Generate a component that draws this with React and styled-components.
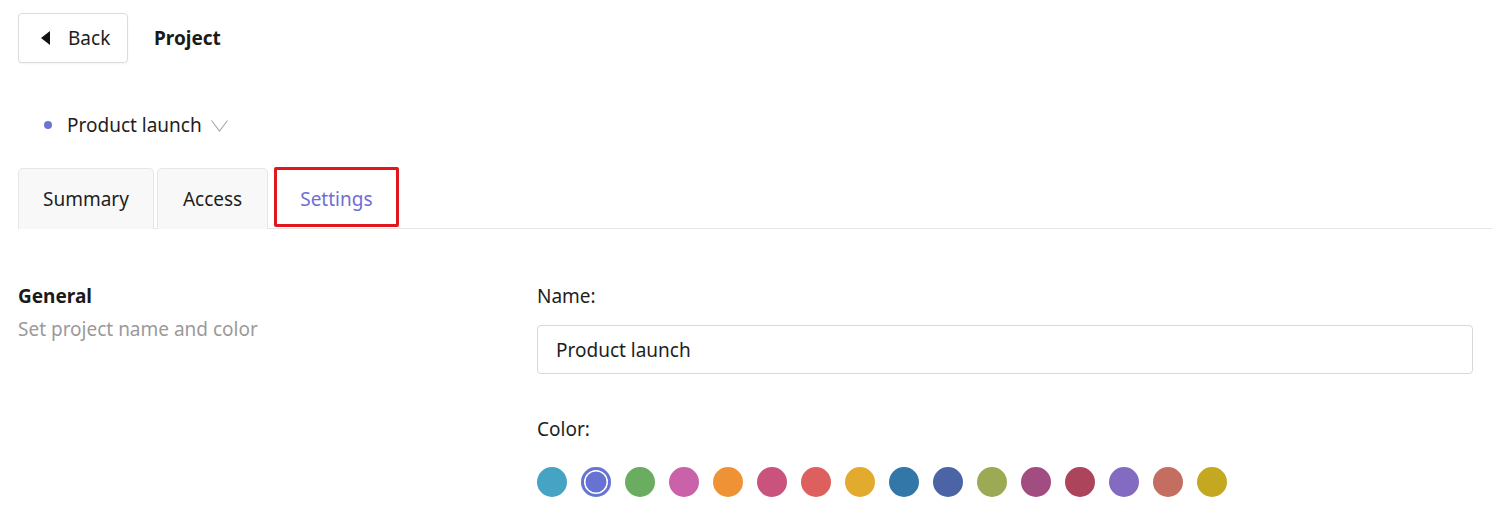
import React from "react";
import styled, { createGlobalStyle } from "styled-components";

const Global = createGlobalStyle`
  html, body { margin: 0; padding: 0; background: #fff; }
  body { font-family: "Noto Sans", "Open Sans", sans-serif; color: #1e1e1e; }
  * { box-sizing: border-box; }
`;

const Page = styled.div`
  width: 1492px;
  padding-top: 13px;
`;

const Header = styled.div`
  display: flex;
  align-items: center;
  gap: 26px;
  padding-left: 18px;
  height: 50px;
`;

const BackButton = styled.button`
  display: flex;
  align-items: center;
  gap: 18px;
  height: 50px;
  width: 110px;
  padding: 0 0 0 22px;
  background: #fff;
  border: 1px solid #dcdcdc;
  border-radius: 4px;
  box-shadow: 0 1px 2px rgba(0, 0, 0, 0.05);
  font: inherit;
  font-size: 19px;
  color: #1e1e1e;
`;

const Title = styled.div`
  font-size: 19px;
  font-weight: 700;
  color: #1a1a1a;
`;

const ProjectRow = styled.div`
  display: flex;
  align-items: center;
  height: 40px;
  margin-top: 42px;
  padding-left: 44px;
  font-size: 19px;
  color: #1e1e1e;
`;

const Dot = styled.span`
  width: 8px;
  height: 8px;
  border-radius: 50%;
  background: ${(p) => p.$color};
  margin-right: 15px;
`;

const Chevron = styled.svg`
  margin-left: 9px;
  margin-top: 1px;
`;

const TabBar = styled.div`
  display: flex;
  gap: 3px;
  margin-top: 23px;
  margin-left: 18px;
  border-bottom: 1px solid #e6e6e6;
  height: 61px;
`;

const Tab = styled.div`
  display: flex;
  align-items: center;
  justify-content: center;
  padding: ${(p) => (p.$active ? "4px" : "0")} ${(p) => p.$pad}px 0;
  font-size: 19px;
  border: 1px solid ${(p) => (p.$active ? "#e0181e" : "#e6e6e6")};
  border-width: ${(p) => (p.$active ? "3px" : "1px 1px 0 1px")};
  border-radius: ${(p) => (p.$active ? "2px" : "5px 5px 0 0")};
  background: ${(p) => (p.$active ? "#fff" : "#f8f8f8")};
  color: ${(p) => (p.$active ? "#6d6dd6" : "#1e1e1e")};
  margin-left: ${(p) => (p.$active ? "3px" : "0")};
  height: ${(p) => (p.$active ? "60px" : "61px")};
  margin-top: ${(p) => (p.$active ? "-1px" : "0")};
`;

const Section = styled.div`
  display: grid;
  grid-template-columns: 519px 1fr;
  padding: 55px 19px 0 18px;
`;

const SideInfo = styled.div`
  display: flex;
  flex-direction: column;
  gap: 8px;
`;

const SideTitle = styled.div`
  font-size: 19px;
  font-weight: 700;
  color: #1a1a1a;
  line-height: 25px;
`;

const SideText = styled.div`
  font-size: 19px;
  color: #9a9a9a;
  line-height: 25px;
`;

const Fields = styled.div`
  display: flex;
  flex-direction: column;
`;

const Label = styled.div`
  font-size: 19px;
  line-height: 25px;
  color: #1e1e1e;
  margin-top: ${(p) => p.$top || 0}px;
`;

const Input = styled.div`
  margin-top: 16px;
  height: 49px;
  border: 1px solid #d8d8d8;
  border-radius: 4px;
  display: flex;
  align-items: center;
  padding-left: 18px;
  font-size: 19px;
  color: #1e1e1e;
`;

const Swatches = styled.div`
  display: flex;
  align-items: center;
  gap: 14px;
  margin-top: 25px;
`;

const Swatch = styled.div`
  width: 30px;
  height: 30px;
  border-radius: 50%;
  background: ${(p) => p.$color};
  box-shadow: ${(p) =>
    p.$selected ? `inset 0 0 0 3px ${p.$color}, inset 0 0 0 4.5px #fff` : "none"};
`;

const colors = [
  "#46a3c4",
  "#6673d3",
  "#6aad60",
  "#c962a8",
  "#ef9235",
  "#c9537c",
  "#dd5f5e",
  "#e3ab2e",
  "#3377a8",
  "#4a64a5",
  "#9daa55",
  "#a14d82",
  "#ac445c",
  "#836bc1",
  "#c46e61",
  "#c4a820",
];

export default function App() {
  return (
    <Page>
      <Global />
      <Header>
        <BackButton>
          <svg width="9" height="14" viewBox="0 0 9 14">
            <polygon points="9,0 9,14 0,7" fill="#111" />
          </svg>
          Back
        </BackButton>
        <Title>Project</Title>
      </Header>
      <ProjectRow>
        <Dot $color="#6a76cf" />
        Product launch
        <Chevron width="17" height="12" viewBox="0 0 17 12">
          <polyline
            points="0.5,0.5 8.5,11 16.5,0.5"
            fill="none"
            stroke="#a8a8a8"
            strokeWidth="1.1"
          />
        </Chevron>
      </ProjectRow>
      <TabBar>
        <Tab $pad={24}>Summary</Tab>
        <Tab $pad={25}>Access</Tab>
        <Tab $pad={23} $active>
          Settings
        </Tab>
      </TabBar>
      <Section>
        <SideInfo>
          <SideTitle>General</SideTitle>
          <SideText>Set project name and color</SideText>
        </SideInfo>
        <Fields>
          <Label>Name:</Label>
          <Input>Product launch</Input>
          <Label $top={43}>Color:</Label>
          <Swatches>
            {colors.map((c, i) => (
              <Swatch key={c} $color={c} $selected={i === 1} />
            ))}
          </Swatches>
        </Fields>
      </Section>
    </Page>
  );
}
